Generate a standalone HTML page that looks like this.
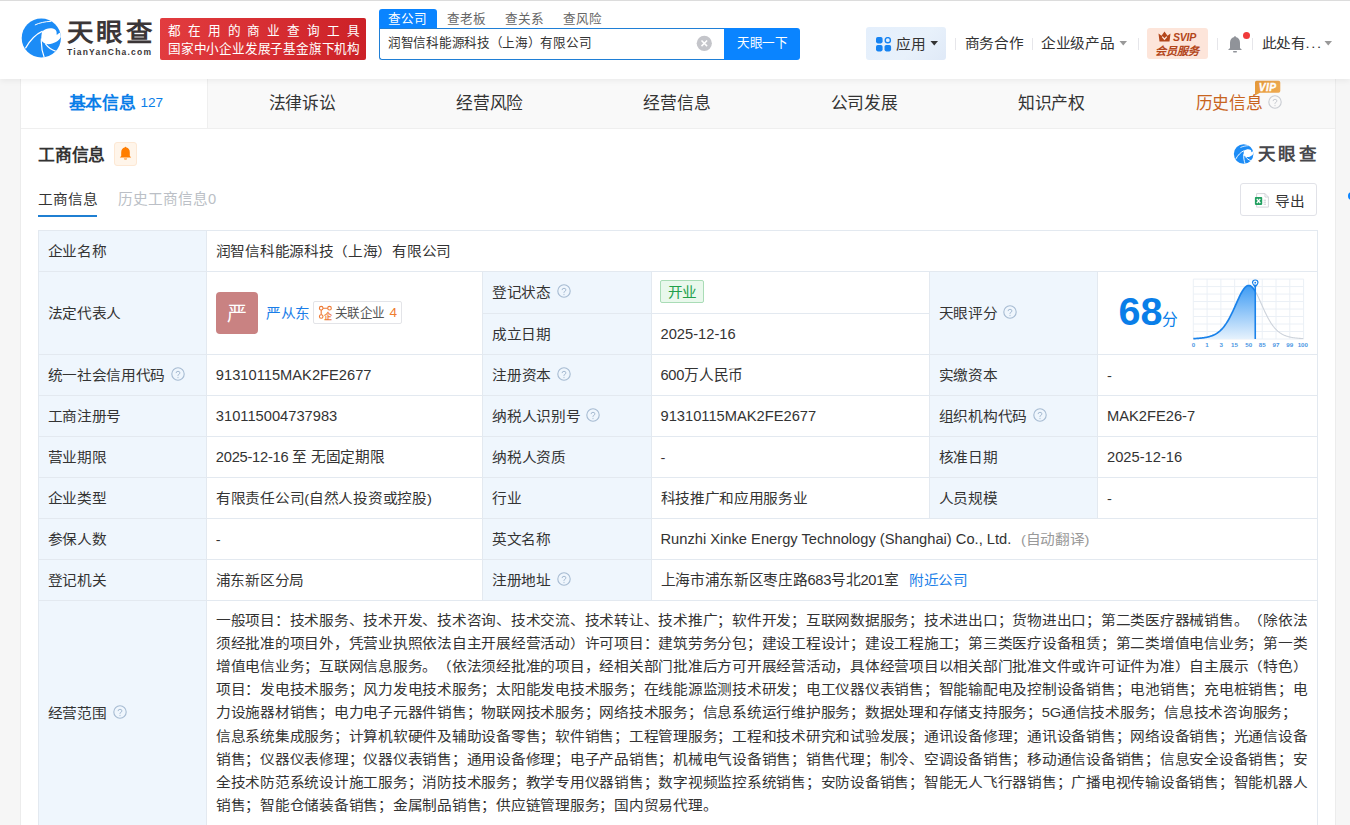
<!DOCTYPE html>
<html lang="zh-CN"><head><meta charset="utf-8">
<style>
*{margin:0;padding:0;box-sizing:border-box}
html,body{text-spacing-trim:space-all;width:1350px;height:825px;overflow:hidden;background:#f6f6f6;font-family:"Liberation Sans",sans-serif;color:#333}
.abs{position:absolute}
#hdr{position:absolute;left:0;top:0;width:1350px;height:79px;background:#fff;box-shadow:0 2px 6px rgba(0,0,0,.06);z-index:3}
.t{position:absolute;white-space:nowrap;line-height:1}
</style></head><body>
<div id="hdr">
 <svg class="abs" style="left:18px;top:14px" width="48" height="48" viewBox="0 0 48 48">
  <defs><clipPath id="lc"><circle cx="23.3" cy="24" r="19.6"/></clipPath></defs>
  <g clip-path="url(#lc)">
  <rect x="0" y="0" width="48" height="48" fill="#1c8cf6"/>
  <path d="M23.3 24.5 C23.3 21 23.8 18.8 24.4 17.2 C28 14.3 33.5 13.2 37.4 15.8 C38.8 17 38.9 19.5 38.4 20.6 C39.5 20.5 40.3 19.8 40.7 19.2 L46 17 L46 23.3 L42.8 23.3 C41 27.5 33 31.5 27.3 29.7 C25 28.8 23.3 27 23.3 24.5 Z" fill="#fff"/>
  <path d="M16.9 11 C21 9 27 7.5 33.4 7.3" stroke="#fff" stroke-width="1" fill="none"/>
  <path d="M7.4 34.4 C12 26 17 20.5 24.6 17.1" stroke="#fff" stroke-width="1.2" fill="none"/>
  <path d="M23.4 24.5 C23 31 24 38 26.4 44" stroke="#fff" stroke-width="1.2" fill="none"/>
  <path d="M27.3 29.7 C30 33.5 33.5 36 38 37.3" stroke="#fff" stroke-width="1.2" fill="none"/>
  </g>
 </svg>
 <div class="t" style="left:67px;top:20px;font-size:25px;font-weight:900;letter-spacing:2.7px;color:#3b3637;transform:scaleX(1.06);transform-origin:0 0">天眼查</div>
 <div class="t" style="left:67px;top:48px;font-size:8.5px;font-weight:bold;letter-spacing:1.2px;color:#3b3637">TianYanCha.com</div>
 <div class="abs" style="left:160px;top:18px;width:206px;height:42px;border-radius:2px;background:linear-gradient(90deg,#e23c3f,#cc2127)"></div>
 <div class="t" style="left:168px;top:25px;font-size:12.6px;letter-spacing:6.85px;color:#fff">都在用的商业查询工具</div>
 <div class="t" style="left:168px;top:42.5px;font-size:12.6px;letter-spacing:-0.2px;color:#fff">国家中小企业发展子基金旗下机构</div>
 <div class="abs" style="left:379px;top:9px;width:58px;height:20px;background:#0a84ff;border-radius:3px 3px 0 0"></div>
 <div class="t" style="left:388px;top:13px;font-size:12.6px;letter-spacing:0.15px;color:#fff">查公司</div>
 <div class="t" style="left:447px;top:13px;font-size:12.6px;letter-spacing:0.15px;color:#666">查老板</div>
 <div class="t" style="left:505px;top:13px;font-size:12.6px;letter-spacing:0.15px;color:#666">查关系</div>
 <div class="t" style="left:563px;top:13px;font-size:12.6px;letter-spacing:0.15px;color:#666">查风险</div>
 <div class="abs" style="left:379px;top:28px;width:346px;height:32px;border:1px solid #1f7fd6;border-right:0;border-radius:0 0 0 3px;background:#fff"></div>
 <div class="t" style="left:388px;top:37px;font-size:12.6px;letter-spacing:-0.3px;color:#333">润智信科能源科技（上海）有限公司</div>
 <svg class="abs" style="left:696px;top:35px" width="17" height="17" viewBox="0 0 17 17"><circle cx="8.3" cy="8.3" r="7.6" fill="#c4c5ca"/><path d="M5.5 5.5 L11.1 11.1 M11.1 5.5 L5.5 11.1" stroke="#fff" stroke-width="1.5"/></svg>
 <div class="abs" style="left:724px;top:28px;width:76px;height:32px;background:#0a84ff;border-radius:0 3px 3px 0"></div>
 <div class="t" style="left:737px;top:36.5px;font-size:12.6px;letter-spacing:-0.35px;color:#fff">天眼一下</div>

 <div class="abs" style="left:866px;top:27px;width:80px;height:33px;border-radius:3px;background:linear-gradient(135deg,#e4effc 0%,#e8f1fb 60%,#dfe9f7 100%)"></div>
 <svg class="abs" style="left:876px;top:37px" width="16" height="15" viewBox="0 0 16 15">
  <rect x="0" y="0" width="6.6" height="6.4" rx="1.8" fill="#1683f2"/>
  <circle cx="11.8" cy="3.2" r="2.6" fill="none" stroke="#1683f2" stroke-width="1.4"/>
  <rect x="0" y="8" width="6.6" height="6.4" rx="1.8" fill="#1683f2"/>
  <rect x="8.5" y="8" width="6.6" height="6.4" rx="1.8" fill="#1683f2"/>
 </svg>
 <div class="t" style="left:896px;top:36.5px;font-size:14.7px;letter-spacing:0.3px;color:#333;transform:scaleY(0.9);transform-origin:0 14.3px">应用</div>
 <svg class="abs" style="left:930px;top:41px" width="9" height="5" viewBox="0 0 9 5"><path d="M0.5 0 L8 0 L4.25 4.5 Z" fill="#333"/></svg>
 <div class="abs" style="left:955px;top:38px;width:1px;height:12px;background:#e6e6ea"></div>
 <div class="t" style="left:964.5px;top:36px;font-size:14.7px;letter-spacing:-0.3px;color:#333;transform:scaleY(0.9);transform-origin:0 14.3px">商务合作</div>
 <div class="abs" style="left:1032px;top:38px;width:1px;height:12px;background:#e6e6ea"></div>
 <div class="t" style="left:1041px;top:36px;font-size:14.7px;letter-spacing:-0.3px;color:#333;transform:scaleY(0.9);transform-origin:0 14.3px">企业级产品</div>
 <svg class="abs" style="left:1119px;top:41px" width="9" height="5" viewBox="0 0 9 5"><path d="M0.5 0 L8 0 L4.25 4.5 Z" fill="#999"/></svg>
 <div class="abs" style="left:1138px;top:38px;width:1px;height:12px;background:#e6e6ea"></div>
 <div class="abs" style="left:1147px;top:28px;width:61px;height:31px;border-radius:3px;background:#fde5da"></div>
 <svg class="abs" style="left:1158px;top:31px" width="13" height="11" viewBox="0 0 13 11"><path d="M0.5 2.5 L3.5 4.8 L6.5 0.6 L9.5 4.8 L12.5 2.5 L11.5 10.4 L1.5 10.4 Z" fill="#b3461a"/><path d="M4.2 5.6 L6.5 8.2 L8.8 5.6" stroke="#fde5da" stroke-width="1.3" fill="none"/></svg>
 <div class="t" style="left:1173px;top:31.5px;font-size:10.6px;font-weight:bold;font-style:italic;letter-spacing:-0.3px;color:#b3461a">SVIP</div>
 <div class="t" style="left:1154.5px;top:46px;font-size:11.2px;font-weight:bold;font-style:italic;color:#b3461a">会员服务</div>
 <div class="abs" style="left:1217px;top:38px;width:1px;height:12px;background:#e6e6ea"></div>
 <svg class="abs" style="left:1227px;top:35px" width="16" height="18" viewBox="0 0 16 18"><path d="M8 1 Q8.8 1 8.8 2 Q13 3 13 8 L13 13 L15 15 L1 15 L3 13 L3 8 Q3 3 7.2 2 Q7.2 1 8 1 Z" fill="#909399"/><rect x="6" y="16" width="4" height="1.4" rx="0.7" fill="#909399"/></svg>
 <div class="abs" style="left:1243px;top:31.5px;width:7px;height:7px;border-radius:50%;background:#f03a3a"></div>
 <div class="abs" style="left:1252px;top:38px;width:1px;height:12px;background:#e6e6ea"></div>
 <div class="t" style="left:1261.5px;top:36px;font-size:14.7px;letter-spacing:-0.3px;color:#333;transform:scaleY(0.9);transform-origin:0 14.3px">此处有<span style="letter-spacing:1.6px">...</span></div>
 <svg class="abs" style="left:1324px;top:41px" width="9" height="5" viewBox="0 0 9 5"><path d="M0.5 0 L8 0 L4.25 4.5 Z" fill="#999"/></svg>
</div>

<div class="abs" style="left:20px;top:79px;width:1316px;height:760px;background:#fff;border-left:1px solid #ececec;border-right:1px solid #ececec"></div>
<div class="abs" style="left:21px;top:79px;width:1314px;height:49px;background:#f9f9f9"></div>
<div class="abs" style="left:21px;top:128px;width:1314px;height:1px;background:#efefef"></div>
<div class="abs" style="left:21px;top:79px;width:186px;height:49px;background:#fff"></div>
<div class="abs" style="left:207px;top:79px;width:1px;height:49px;background:#efefef"></div>
<div class="t" style="left:68.5px;top:95.70px;font-size:16.8px;color:#0a7ee8;font-weight:bold;letter-spacing:-0.200px;">基本信息</div>
<div class="t" style="left:140.5px;top:95.90px;font-size:13.6px;color:#0a7ee8;">127</div>
<div class="t" style="left:268.7px;top:95.70px;font-size:16.8px;color:#333;letter-spacing:-0.200px;">法律诉讼</div>
<div class="t" style="left:456.0px;top:95.70px;font-size:16.8px;color:#333;letter-spacing:-0.200px;">经营风险</div>
<div class="t" style="left:643.3px;top:95.70px;font-size:16.8px;color:#333;letter-spacing:-0.200px;">经营信息</div>
<div class="t" style="left:830.6px;top:95.70px;font-size:16.8px;color:#333;letter-spacing:-0.200px;">公司发展</div>
<div class="t" style="left:1017.9px;top:95.70px;font-size:16.8px;color:#333;letter-spacing:-0.200px;">知识产权</div>
<div class="t" style="left:1195.5px;top:95.70px;font-size:16.8px;color:#c8641e;letter-spacing:-0.200px;">历史信息</div>
<svg class="abs" style="left:1268px;top:94.7px" width="14" height="14" viewBox="0 0 14 14"><circle cx="7" cy="7" r="6.2" fill="none" stroke="#c9ccd2" stroke-width="1.1"/><path d="M5.1 6.1 Q5.1 4.3 7 4.3 Q8.9 4.3 8.9 5.9 Q8.9 7 7.4 7.6 Q7 7.8 7 8.6 L7 9.1" fill="none" stroke="#c9ccd2" stroke-width="1"/><circle cx="7" cy="10.6" r="0.6" fill="#c9ccd2"/></svg>
<svg class="abs" style="left:1254px;top:80px" width="27" height="16" viewBox="0 0 27 16"><defs><linearGradient id="vg" x1="0" y1="0" x2="1" y2="0"><stop offset="0" stop-color="#e79a3a"/><stop offset="1" stop-color="#eeaa52"/></linearGradient></defs><path d="M2.5 0.8 L24.5 0.8 Q26.3 0.8 26.3 2.6 L26.3 11 Q26.3 12.8 24.5 12.8 L6 12.8 L1 15.5 L1 2.6 Q1 0.8 2.5 0.8 Z" fill="url(#vg)"/><text x="13.6" y="10.6" text-anchor="middle" font-family="Liberation Sans" font-weight="bold" font-style="italic" font-size="10.2" letter-spacing="0.5" fill="#fff" stroke="#fff" stroke-width="0.35">VIP</text></svg>
<div class="t" style="left:38px;top:147.70px;font-size:16.8px;color:#333;font-weight:bold;letter-spacing:-0.200px;">工商信息</div>
<div class="abs" style="left:114px;top:142px;width:23px;height:24px;background:#fff5ea;border:1px solid #fde8d4;border-radius:3px"></div>
<svg class="abs" style="left:119px;top:146px" width="13" height="14" viewBox="0 0 13 14"><path d="M6.5 0.8 Q7.3 0.8 7.3 1.6 Q10.8 2.4 10.8 6.6 L10.8 10 L12.2 11.6 L0.8 11.6 L2.2 10 L2.2 6.6 Q2.2 2.4 5.7 1.6 Q5.7 0.8 6.5 0.8 Z" fill="#ff7d00"/><path d="M4.8 12.4 L8.2 12.4 Q7.8 13.6 6.5 13.6 Q5.2 13.6 4.8 12.4 Z" fill="#ff7d00"/></svg>
<svg class="abs" style="left:1232px;top:142px" width="24" height="24" viewBox="0 0 48 48"><defs><clipPath id="lc2"><circle cx="23.3" cy="24" r="19.6"/></clipPath></defs><g clip-path="url(#lc2)"><rect x="0" y="0" width="48" height="48" fill="#1c8cf6"/><path d="M23.3 24.5 C23.3 21 23.8 18.8 24.4 17.2 C28 14.3 33.5 13.2 37.4 15.8 C38.8 17 38.9 19.5 38.4 20.6 C39.5 20.5 40.3 19.8 40.7 19.2 L46 17 L46 23.3 L42.8 23.3 C41 27.5 33 31.5 27.3 29.7 C25 28.8 23.3 27 23.3 24.5 Z" fill="#fff"/><path d="M16.9 11 C21 9 27 7.5 33.4 7.3" stroke="#fff" stroke-width="1.6" fill="none"/><path d="M7.4 34.4 C12 26 17 20.5 24.6 17.1" stroke="#fff" stroke-width="1.9" fill="none"/><path d="M23.4 24.5 C23 31 24 38 26.4 44" stroke="#fff" stroke-width="1.9" fill="none"/><path d="M27.3 29.7 C30 33.5 33.5 36 38 37.3" stroke="#fff" stroke-width="1.9" fill="none"/></g></svg>
<div class="t" style="left:1257.5px;top:146.05px;font-size:17.5px;color:#47474b;font-weight:bold;letter-spacing:3.6px">天眼查</div>
<div class="t" style="left:38px;top:191.55px;font-size:14.7px;color:#333;transform:scaleY(0.9);transform-origin:0 14.3px;">工商信息</div>
<div class="t" style="left:118px;top:191.55px;font-size:14.7px;color:#bbbfc6;">历史工商信息0</div>
<div class="abs" style="left:38px;top:215px;width:59px;height:2px;background:#1f7fd2"></div>
<div class="abs" style="left:1240px;top:183px;width:77px;height:33px;border:1px solid #e1e2e8;border-radius:3px;background:#fff"></div>
<svg class="abs" style="left:1254px;top:192px" width="16" height="17" viewBox="0 0 16 17"><path d="M2.6 1.6 L11 1.6 L14.4 5 L14.4 15.1 L2.6 15.1 Z" fill="#fff" stroke="#d3d5da" stroke-width="1"/><path d="M11 1.6 L11 5 L14.4 5" fill="none" stroke="#d3d5da" stroke-width="1"/><path d="M9.6 8.2 L12 8.2 M9.6 10.2 L12 10.2 M9.6 12.2 L12 12.2" stroke="#c5c8ce" stroke-width="0.9"/><rect x="0.9" y="5" width="7.3" height="7.9" rx="0.8" fill="#22a060"/><path d="M2.8 6.9 L6.3 11 M6.3 6.9 L2.8 11" stroke="#fff" stroke-width="1.3"/></svg>
<div class="t" style="left:1275px;top:194.25px;font-size:14.7px;color:#333;letter-spacing:-0.300px;transform:scaleY(0.9);transform-origin:0 14.3px;">导出</div>
<div class="abs" style="left:38px;top:230px;width:168px;height:596px;background:#eff6fd"></div>
<div class="abs" style="left:482px;top:271px;width:169px;height:329px;background:#eff6fd"></div>
<div class="abs" style="left:929px;top:271px;width:168px;height:247px;background:#eff6fd"></div>
<div class="abs" style="left:38px;top:230px;width:1280px;height:1px;background:#e3e9f0"></div>
<div class="abs" style="left:38px;top:271px;width:1280px;height:1px;background:#e3e9f0"></div>
<div class="abs" style="left:38px;top:354px;width:1280px;height:1px;background:#e3e9f0"></div>
<div class="abs" style="left:38px;top:395px;width:1280px;height:1px;background:#e3e9f0"></div>
<div class="abs" style="left:38px;top:436px;width:1280px;height:1px;background:#e3e9f0"></div>
<div class="abs" style="left:38px;top:477px;width:1280px;height:1px;background:#e3e9f0"></div>
<div class="abs" style="left:38px;top:518px;width:1280px;height:1px;background:#e3e9f0"></div>
<div class="abs" style="left:38px;top:559px;width:1280px;height:1px;background:#e3e9f0"></div>
<div class="abs" style="left:38px;top:600px;width:1280px;height:1px;background:#e3e9f0"></div>
<div class="abs" style="left:482px;top:313px;width:447px;height:1px;background:#e3e9f0"></div>
<div class="abs" style="left:38px;top:230px;width:1px;height:596px;background:#e3e9f0"></div>
<div class="abs" style="left:206px;top:230px;width:1px;height:596px;background:#e3e9f0"></div>
<div class="abs" style="left:1317px;top:230px;width:1px;height:596px;background:#e3e9f0"></div>
<div class="abs" style="left:482px;top:271px;width:1px;height:329px;background:#e3e9f0"></div>
<div class="abs" style="left:651px;top:271px;width:1px;height:329px;background:#e3e9f0"></div>
<div class="abs" style="left:929px;top:271px;width:1px;height:247px;background:#e3e9f0"></div>
<div class="abs" style="left:1097px;top:271px;width:1px;height:247px;background:#e3e9f0"></div>
<div class="t" style="left:47.6px;top:244.25px;font-size:14.7px;color:#333;letter-spacing:-0.300px;transform:scaleY(0.9);transform-origin:0 14.3px;">企业名称</div>
<div class="t" style="left:215.8px;top:244.25px;font-size:14.7px;color:#333;letter-spacing:-0.300px;transform:scaleY(0.9);transform-origin:0 14.3px;">润智信科能源科技（上海）有限公司</div>
<div class="t" style="left:47.6px;top:306.25px;font-size:14.7px;color:#333;letter-spacing:-0.300px;transform:scaleY(0.9);transform-origin:0 14.3px;">法定代表人</div>
<div class="abs" style="left:216px;top:292px;width:42px;height:42px;background:#c98282;border-radius:4px"></div>
<div class="t" style="left:226.5px;top:303.60px;font-size:20px;color:#fff;">严</div>
<div class="t" style="left:266px;top:305.65px;font-size:14.7px;color:#1a7ee8;letter-spacing:-0.300px;transform:scaleY(0.9);transform-origin:0 14.3px;">严从东</div>
<div class="abs" style="left:313px;top:301px;width:89px;height:23px;border:1px solid #e3e4e8;border-radius:2px;background:#fff"></div>
<svg class="abs" style="left:318px;top:305px" width="16" height="16" viewBox="0 0 16 16"><g fill="none" stroke="#ee7a35" stroke-width="1.1"><circle cx="3.2" cy="3.2" r="1.8"/><circle cx="11.5" cy="3.2" r="1.8"/><circle cx="3.2" cy="11.5" r="1.8"/><path d="M5 3.2 L9.7 3.2 M3.2 5 L3.2 9.7"/></g><text x="10" y="14" text-anchor="middle" font-size="8" font-weight="bold" fill="#ee7a35">企</text></svg>
<div class="t" style="left:334.5px;top:306.70px;font-size:12.6px;color:#555;letter-spacing:-0.400px;">关联企业</div>
<div class="t" style="left:389.5px;top:306.10px;font-size:13.6px;color:#f07c2e;">4</div>
<div class="t" style="left:492px;top:285.45px;font-size:14.7px;color:#333;letter-spacing:-0.300px;transform:scaleY(0.9);transform-origin:0 14.3px;">登记状态</div>
<svg class="abs" style="left:556.5px;top:283.9px" width="14" height="14" viewBox="0 0 14 14"><circle cx="7" cy="7" r="6.2" fill="none" stroke="#a6bbd2" stroke-width="1.1"/><path d="M5.1 6.1 Q5.1 4.3 7 4.3 Q8.9 4.3 8.9 5.9 Q8.9 7 7.4 7.6 Q7 7.8 7 8.6 L7 9.1" fill="none" stroke="#a6bbd2" stroke-width="1"/><circle cx="7" cy="10.6" r="0.6" fill="#a6bbd2"/></svg>
<div class="t" style="left:492px;top:326.75px;font-size:14.7px;color:#333;letter-spacing:-0.300px;transform:scaleY(0.9);transform-origin:0 14.3px;">成立日期</div>
<div class="abs" style="left:660px;top:280px;width:44px;height:23px;background:#e9f8ec;border:1px solid #a9dcb6;border-radius:2px"></div>
<div class="t" style="left:667.5px;top:285.05px;font-size:14.7px;color:#22a04b;letter-spacing:-0.300px;transform:scaleY(0.9);transform-origin:0 14.3px;">开业</div>
<div class="t" style="left:660.5px;top:326.65px;font-size:14.7px;color:#333;">2025-12-16</div>
<div class="t" style="left:938.8px;top:305.75px;font-size:14.7px;color:#333;letter-spacing:-0.300px;transform:scaleY(0.9);transform-origin:0 14.3px;">天眼评分</div>
<svg class="abs" style="left:1003px;top:304.7px" width="14" height="14" viewBox="0 0 14 14"><circle cx="7" cy="7" r="6.2" fill="none" stroke="#a6bbd2" stroke-width="1.1"/><path d="M5.1 6.1 Q5.1 4.3 7 4.3 Q8.9 4.3 8.9 5.9 Q8.9 7 7.4 7.6 Q7 7.8 7 8.6 L7 9.1" fill="none" stroke="#a6bbd2" stroke-width="1"/><circle cx="7" cy="10.6" r="0.6" fill="#a6bbd2"/></svg>
<div class="t" style="left:1118.5px;top:292.2px;font-size:39.5px;font-weight:bold;color:#0a7ee8">68</div>
<div class="t" style="left:1162px;top:311.75px;font-size:15.7px;color:#0a7ee8;letter-spacing:-0.300px;">分</div>
<svg class="abs" style="left:1188px;top:274px" width="124" height="76" viewBox="0 0 124 76">
<defs><linearGradient id="cg" x1="0" y1="0" x2="0" y2="1"><stop offset="0" stop-color="#3d9bf4"/><stop offset="1" stop-color="#e6f2fd"/></linearGradient></defs>
<g stroke="#ebf0f6" stroke-width="1"><line x1="5.30" y1="5.10" x2="5.30" y2="65.00"/><line x1="19.09" y1="5.10" x2="19.09" y2="65.00"/><line x1="32.88" y1="5.10" x2="32.88" y2="65.00"/><line x1="46.66" y1="5.10" x2="46.66" y2="65.00"/><line x1="60.45" y1="5.10" x2="60.45" y2="65.00"/><line x1="74.24" y1="5.10" x2="74.24" y2="65.00"/><line x1="88.02" y1="5.10" x2="88.02" y2="65.00"/><line x1="101.81" y1="5.10" x2="101.81" y2="65.00"/><line x1="115.60" y1="5.10" x2="115.60" y2="65.00"/><line x1="5.30" y1="5.10" x2="115.60" y2="5.10"/><line x1="5.30" y1="12.59" x2="115.60" y2="12.59"/><line x1="5.30" y1="20.07" x2="115.60" y2="20.07"/><line x1="5.30" y1="27.56" x2="115.60" y2="27.56"/><line x1="5.30" y1="35.05" x2="115.60" y2="35.05"/><line x1="5.30" y1="42.54" x2="115.60" y2="42.54"/><line x1="5.30" y1="50.02" x2="115.60" y2="50.02"/><line x1="5.30" y1="57.51" x2="115.60" y2="57.51"/><line x1="5.30" y1="65.00" x2="115.60" y2="65.00"/></g>
<path d="M5.30 64.63 L5.80 64.61 L6.30 64.58 L6.80 64.56 L7.30 64.53 L7.80 64.51 L8.30 64.48 L8.80 64.45 L9.30 64.41 L9.80 64.38 L10.30 64.34 L10.80 64.30 L11.30 64.26 L11.80 64.22 L12.30 64.17 L12.80 64.12 L13.30 64.07 L13.80 64.01 L14.30 63.95 L14.80 63.89 L15.30 63.82 L15.80 63.75 L16.30 63.67 L16.80 63.59 L17.30 63.51 L17.80 63.42 L18.30 63.32 L18.80 63.22 L19.30 63.11 L19.80 63.00 L20.30 62.88 L20.80 62.75 L21.30 62.61 L21.80 62.47 L22.30 62.31 L22.80 62.15 L23.30 61.98 L23.80 61.80 L24.30 61.61 L24.80 61.40 L25.30 61.19 L25.80 60.96 L26.30 60.72 L26.80 60.47 L27.30 60.20 L27.80 59.92 L28.30 59.62 L28.80 59.31 L29.30 58.98 L29.80 58.63 L30.30 58.27 L30.80 57.88 L31.30 57.48 L31.80 57.05 L32.30 56.61 L32.80 56.14 L33.30 55.65 L33.80 55.14 L34.30 54.60 L34.80 54.04 L35.30 53.45 L35.80 52.84 L36.30 52.20 L36.80 51.54 L37.30 50.85 L37.80 50.13 L38.30 49.38 L38.80 48.61 L39.30 47.81 L39.80 46.98 L40.30 46.13 L40.80 45.25 L41.30 44.34 L41.80 43.41 L42.30 42.45 L42.80 41.47 L43.30 40.46 L43.80 39.44 L44.30 38.39 L44.80 37.33 L45.30 36.25 L45.80 35.16 L46.30 34.05 L46.80 32.94 L47.30 31.81 L47.80 30.69 L48.30 29.56 L48.80 28.44 L49.30 27.32 L49.80 26.21 L50.30 25.12 L50.80 24.04 L51.30 22.98 L51.80 21.94 L52.30 20.93 L52.80 19.96 L53.30 19.02 L53.80 18.12 L54.30 17.26 L54.80 16.45 L55.30 15.69 L55.80 14.99 L56.30 14.34 L56.80 13.75 L57.30 13.23 L57.80 12.77 L58.30 12.38 L58.80 12.06 L59.30 11.81 L59.80 11.63 L60.30 11.53 L60.80 11.50 L61.30 11.54 L61.80 11.66 L62.30 11.85 L62.80 12.12 L63.30 12.45 L63.80 12.86 L64.30 13.33 L64.80 13.87 L65.30 14.47 L65.80 15.12 L66.30 15.84 L66.80 16.61 L67.25 17.34 L67.25 65.00 L5.30 65.00 Z" fill="url(#cg)"/>
<path d="M67.25 17.34 L67.75 18.21 L68.25 19.11 L68.75 20.05 L69.25 21.03 L69.75 22.04 L70.25 23.08 L70.75 24.14 L71.25 25.22 L71.75 26.32 L72.25 27.43 L72.75 28.55 L73.25 29.68 L73.75 30.80 L74.25 31.93 L74.75 33.05 L75.25 34.16 L75.75 35.27 L76.25 36.36 L76.75 37.44 L77.25 38.50 L77.75 39.54 L78.25 40.56 L78.75 41.57 L79.25 42.54 L79.75 43.50 L80.25 44.43 L80.75 45.33 L81.25 46.21 L81.75 47.07 L82.25 47.89 L82.75 48.69 L83.25 49.46 L83.75 50.20 L84.25 50.92 L84.75 51.60 L85.25 52.27 L85.75 52.90 L86.25 53.51 L86.75 54.10 L87.25 54.65 L87.75 55.19 L88.25 55.70 L88.75 56.19 L89.25 56.65 L89.75 57.10 L90.25 57.52 L90.75 57.92 L91.25 58.30 L91.75 58.67 L92.25 59.01 L92.75 59.34 L93.25 59.65 L93.75 59.95 L94.25 60.23 L94.75 60.50 L95.25 60.75 L95.75 60.99 L96.25 61.21 L96.75 61.43 L97.25 61.63 L97.75 61.82 L98.25 62.00 L98.75 62.17 L99.25 62.33 L99.75 62.48 L100.25 62.63 L100.75 62.76 L101.25 62.89 L101.75 63.01 L102.25 63.12 L102.75 63.23 L103.25 63.33 L103.75 63.43 L104.25 63.52 L104.75 63.60 L105.25 63.68 L105.75 63.76 L106.25 63.83 L106.75 63.89 L107.25 63.96 L107.75 64.02 L108.25 64.07 L108.75 64.12 L109.25 64.17 L109.75 64.22 L110.25 64.27 L110.75 64.31 L111.25 64.35 L111.75 64.38 L112.25 64.42 L112.75 64.45 L113.25 64.48 L113.75 64.51 L114.25 64.54 L114.75 64.56 L115.25 64.59" fill="none" stroke="#cdd3db" stroke-width="1.1"/>
<path d="M5.30 64.63 L5.80 64.61 L6.30 64.58 L6.80 64.56 L7.30 64.53 L7.80 64.51 L8.30 64.48 L8.80 64.45 L9.30 64.41 L9.80 64.38 L10.30 64.34 L10.80 64.30 L11.30 64.26 L11.80 64.22 L12.30 64.17 L12.80 64.12 L13.30 64.07 L13.80 64.01 L14.30 63.95 L14.80 63.89 L15.30 63.82 L15.80 63.75 L16.30 63.67 L16.80 63.59 L17.30 63.51 L17.80 63.42 L18.30 63.32 L18.80 63.22 L19.30 63.11 L19.80 63.00 L20.30 62.88 L20.80 62.75 L21.30 62.61 L21.80 62.47 L22.30 62.31 L22.80 62.15 L23.30 61.98 L23.80 61.80 L24.30 61.61 L24.80 61.40 L25.30 61.19 L25.80 60.96 L26.30 60.72 L26.80 60.47 L27.30 60.20 L27.80 59.92 L28.30 59.62 L28.80 59.31 L29.30 58.98 L29.80 58.63 L30.30 58.27 L30.80 57.88 L31.30 57.48 L31.80 57.05 L32.30 56.61 L32.80 56.14 L33.30 55.65 L33.80 55.14 L34.30 54.60 L34.80 54.04 L35.30 53.45 L35.80 52.84 L36.30 52.20 L36.80 51.54 L37.30 50.85 L37.80 50.13 L38.30 49.38 L38.80 48.61 L39.30 47.81 L39.80 46.98 L40.30 46.13 L40.80 45.25 L41.30 44.34 L41.80 43.41 L42.30 42.45 L42.80 41.47 L43.30 40.46 L43.80 39.44 L44.30 38.39 L44.80 37.33 L45.30 36.25 L45.80 35.16 L46.30 34.05 L46.80 32.94 L47.30 31.81 L47.80 30.69 L48.30 29.56 L48.80 28.44 L49.30 27.32 L49.80 26.21 L50.30 25.12 L50.80 24.04 L51.30 22.98 L51.80 21.94 L52.30 20.93 L52.80 19.96 L53.30 19.02 L53.80 18.12 L54.30 17.26 L54.80 16.45 L55.30 15.69 L55.80 14.99 L56.30 14.34 L56.80 13.75 L57.30 13.23 L57.80 12.77 L58.30 12.38 L58.80 12.06 L59.30 11.81 L59.80 11.63 L60.30 11.53 L60.80 11.50 L61.30 11.54 L61.80 11.66 L62.30 11.85 L62.80 12.12 L63.30 12.45 L63.80 12.86 L64.30 13.33 L64.80 13.87 L65.30 14.47 L65.80 15.12 L66.30 15.84 L66.80 16.61 L67.25 17.34" fill="none" stroke="#1a82ea" stroke-width="1.7" stroke-linejoin="round"/>
<line x1="67.25" y1="11" x2="67.25" y2="65.00" stroke="#1a82ea" stroke-width="1.6"/>
<path d="M63.95 8.8 A3.3 3.3 0 1 1 70.55 8.8 Q70.25 10.8 67.25 13.8 Q64.25 10.8 63.95 8.8 Z" fill="#1a82ea"/>
<circle cx="67.25" cy="8.7" r="2.1" fill="#fff"/><circle cx="67.25" cy="8.7" r="0.9" fill="#1a82ea"/>
<g font-family="Liberation Sans" font-size="6.2" font-weight="bold" fill="#4d97e3"><text x="5.4" y="73.2" text-anchor="middle">0</text><text x="19.0" y="73.2" text-anchor="middle">1</text><text x="33.2" y="73.2" text-anchor="middle">3</text><text x="46.4" y="73.2" text-anchor="middle">15</text><text x="60.8" y="73.2" text-anchor="middle">50</text><text x="74.2" y="73.2" text-anchor="middle">85</text><text x="88.0" y="73.2" text-anchor="middle">97</text><text x="101.8" y="73.2" text-anchor="middle">99</text><text x="114.8" y="73.2" text-anchor="middle">100</text></g>
</svg>
<div class="t" style="left:47.6px;top:368.25px;font-size:14.7px;color:#333;letter-spacing:-0.300px;transform:scaleY(0.9);transform-origin:0 14.3px;">统一社会信用代码</div>
<svg class="abs" style="left:170.5px;top:367.4px" width="14" height="14" viewBox="0 0 14 14"><circle cx="7" cy="7" r="6.2" fill="none" stroke="#a6bbd2" stroke-width="1.1"/><path d="M5.1 6.1 Q5.1 4.3 7 4.3 Q8.9 4.3 8.9 5.9 Q8.9 7 7.4 7.6 Q7 7.8 7 8.6 L7 9.1" fill="none" stroke="#a6bbd2" stroke-width="1"/><circle cx="7" cy="10.6" r="0.6" fill="#a6bbd2"/></svg>
<div class="t" style="left:215.8px;top:368.15px;font-size:14.7px;color:#333;">91310115MAK2FE2677</div>
<div class="t" style="left:492px;top:368.25px;font-size:14.7px;color:#333;letter-spacing:-0.250px;transform:scaleY(0.9);transform-origin:0 14.3px;">注册资本</div>
<svg class="abs" style="left:556.5px;top:367.4px" width="14" height="14" viewBox="0 0 14 14"><circle cx="7" cy="7" r="6.2" fill="none" stroke="#a6bbd2" stroke-width="1.1"/><path d="M5.1 6.1 Q5.1 4.3 7 4.3 Q8.9 4.3 8.9 5.9 Q8.9 7 7.4 7.6 Q7 7.8 7 8.6 L7 9.1" fill="none" stroke="#a6bbd2" stroke-width="1"/><circle cx="7" cy="10.6" r="0.6" fill="#a6bbd2"/></svg>
<div class="t" style="left:660.5px;top:368.25px;font-size:14.7px;color:#333;letter-spacing:-0.300px;">600万人民币</div>
<div class="t" style="left:938.8px;top:368.25px;font-size:14.7px;color:#333;letter-spacing:-0.300px;transform:scaleY(0.9);transform-origin:0 14.3px;">实缴资本</div>
<div class="t" style="left:1107px;top:368.15px;font-size:14.7px;color:#333;transform:scaleY(0.9);transform-origin:0 14.3px;">-</div>
<div class="t" style="left:47.6px;top:409.25px;font-size:14.7px;color:#333;letter-spacing:-0.300px;transform:scaleY(0.9);transform-origin:0 14.3px;">工商注册号</div>
<div class="t" style="left:215.8px;top:409.15px;font-size:14.7px;color:#333;">310115004737983</div>
<div class="t" style="left:492px;top:409.25px;font-size:14.7px;color:#333;letter-spacing:-0.250px;transform:scaleY(0.9);transform-origin:0 14.3px;">纳税人识别号</div>
<svg class="abs" style="left:585.8px;top:408.4px" width="14" height="14" viewBox="0 0 14 14"><circle cx="7" cy="7" r="6.2" fill="none" stroke="#a6bbd2" stroke-width="1.1"/><path d="M5.1 6.1 Q5.1 4.3 7 4.3 Q8.9 4.3 8.9 5.9 Q8.9 7 7.4 7.6 Q7 7.8 7 8.6 L7 9.1" fill="none" stroke="#a6bbd2" stroke-width="1"/><circle cx="7" cy="10.6" r="0.6" fill="#a6bbd2"/></svg>
<div class="t" style="left:660.5px;top:409.15px;font-size:14.7px;color:#333;">91310115MAK2FE2677</div>
<div class="t" style="left:938.8px;top:409.25px;font-size:14.7px;color:#333;letter-spacing:-0.300px;transform:scaleY(0.9);transform-origin:0 14.3px;">组织机构代码</div>
<svg class="abs" style="left:1033px;top:408.4px" width="14" height="14" viewBox="0 0 14 14"><circle cx="7" cy="7" r="6.2" fill="none" stroke="#a6bbd2" stroke-width="1.1"/><path d="M5.1 6.1 Q5.1 4.3 7 4.3 Q8.9 4.3 8.9 5.9 Q8.9 7 7.4 7.6 Q7 7.8 7 8.6 L7 9.1" fill="none" stroke="#a6bbd2" stroke-width="1"/><circle cx="7" cy="10.6" r="0.6" fill="#a6bbd2"/></svg>
<div class="t" style="left:1107px;top:409.15px;font-size:14.7px;color:#333;">MAK2FE26-7</div>
<div class="t" style="left:47.6px;top:450.25px;font-size:14.7px;color:#333;letter-spacing:-0.300px;transform:scaleY(0.9);transform-origin:0 14.3px;">营业期限</div>
<div class="t" style="left:215.8px;top:450.25px;font-size:14.7px;color:#333;letter-spacing:-0.250px;">2025-12-16 至 无固定期限</div>
<div class="t" style="left:492px;top:450.25px;font-size:14.7px;color:#333;letter-spacing:-0.250px;transform:scaleY(0.9);transform-origin:0 14.3px;">纳税人资质</div>
<div class="t" style="left:660.5px;top:450.15px;font-size:14.7px;color:#333;transform:scaleY(0.9);transform-origin:0 14.3px;">-</div>
<div class="t" style="left:938.8px;top:450.25px;font-size:14.7px;color:#333;letter-spacing:-0.300px;transform:scaleY(0.9);transform-origin:0 14.3px;">核准日期</div>
<div class="t" style="left:1107px;top:450.15px;font-size:14.7px;color:#333;">2025-12-16</div>
<div class="t" style="left:47.6px;top:491.25px;font-size:14.7px;color:#333;letter-spacing:-0.300px;transform:scaleY(0.9);transform-origin:0 14.3px;">企业类型</div>
<div class="t" style="left:215.8px;top:491.25px;font-size:14.7px;color:#333;letter-spacing:-0.250px;transform:scaleY(0.9);transform-origin:0 14.3px;">有限责任公司(自然人投资或控股)</div>
<div class="t" style="left:492px;top:491.25px;font-size:14.7px;color:#333;letter-spacing:-0.250px;transform:scaleY(0.9);transform-origin:0 14.3px;">行业</div>
<div class="t" style="left:660.5px;top:491.25px;font-size:14.7px;color:#333;letter-spacing:-0.300px;transform:scaleY(0.9);transform-origin:0 14.3px;">科技推广和应用服务业</div>
<div class="t" style="left:938.8px;top:491.25px;font-size:14.7px;color:#333;letter-spacing:-0.300px;transform:scaleY(0.9);transform-origin:0 14.3px;">人员规模</div>
<div class="t" style="left:1107px;top:491.15px;font-size:14.7px;color:#333;transform:scaleY(0.9);transform-origin:0 14.3px;">-</div>
<div class="t" style="left:47.6px;top:532.25px;font-size:14.7px;color:#333;letter-spacing:-0.300px;transform:scaleY(0.9);transform-origin:0 14.3px;">参保人数</div>
<div class="t" style="left:215.8px;top:532.15px;font-size:14.7px;color:#333;transform:scaleY(0.9);transform-origin:0 14.3px;">-</div>
<div class="t" style="left:492px;top:532.25px;font-size:14.7px;color:#333;letter-spacing:-0.300px;transform:scaleY(0.9);transform-origin:0 14.3px;">英文名称</div>
<div class="t" style="left:660.5px;top:532.15px;font-size:14.7px;color:#333;">Runzhi Xinke Energy Technology (Shanghai) Co., Ltd.</div>
<div class="t" style="left:1021px;top:532.25px;font-size:14.7px;color:#999;letter-spacing:-0.300px;transform:scaleY(0.9);transform-origin:0 14.3px;">(自动翻译)</div>
<div class="t" style="left:47.6px;top:573.25px;font-size:14.7px;color:#333;letter-spacing:-0.300px;transform:scaleY(0.9);transform-origin:0 14.3px;">登记机关</div>
<div class="t" style="left:215.8px;top:573.25px;font-size:14.7px;color:#333;letter-spacing:-0.300px;transform:scaleY(0.9);transform-origin:0 14.3px;">浦东新区分局</div>
<div class="t" style="left:492px;top:573.25px;font-size:14.7px;color:#333;letter-spacing:-0.300px;transform:scaleY(0.9);transform-origin:0 14.3px;">注册地址</div>
<svg class="abs" style="left:556.5px;top:572.4px" width="14" height="14" viewBox="0 0 14 14"><circle cx="7" cy="7" r="6.2" fill="none" stroke="#a6bbd2" stroke-width="1.1"/><path d="M5.1 6.1 Q5.1 4.3 7 4.3 Q8.9 4.3 8.9 5.9 Q8.9 7 7.4 7.6 Q7 7.8 7 8.6 L7 9.1" fill="none" stroke="#a6bbd2" stroke-width="1"/><circle cx="7" cy="10.6" r="0.6" fill="#a6bbd2"/></svg>
<div class="t" style="left:660.5px;top:573.25px;font-size:14.7px;color:#333;letter-spacing:-0.300px;">上海市浦东新区枣庄路683号北201室</div>
<div class="t" style="left:909px;top:573.25px;font-size:14.7px;color:#1a7ee8;letter-spacing:-0.300px;transform:scaleY(0.9);transform-origin:0 14.3px;">附近公司</div>
<div class="t" style="left:47.6px;top:705.75px;font-size:14.7px;color:#333;letter-spacing:-0.300px;transform:scaleY(0.9);transform-origin:0 14.3px;">经营范围</div>
<svg class="abs" style="left:112.5px;top:704.9px" width="14" height="14" viewBox="0 0 14 14"><circle cx="7" cy="7" r="6.2" fill="none" stroke="#a6bbd2" stroke-width="1.1"/><path d="M5.1 6.1 Q5.1 4.3 7 4.3 Q8.9 4.3 8.9 5.9 Q8.9 7 7.4 7.6 Q7 7.8 7 8.6 L7 9.1" fill="none" stroke="#a6bbd2" stroke-width="1"/><circle cx="7" cy="10.6" r="0.6" fill="#a6bbd2"/></svg>
<div class="t" style="left:215.8px;top:613.05px;font-size:14.7px;color:#333;letter-spacing:-0.250px;transform:scaleY(0.9);transform-origin:0 14.3px;">一般项目：技术服务、技术开发、技术咨询、技术交流、技术转让、技术推广；软件开发；互联网数据服务；技术进出口；货物进出口；第二类医疗器械销售。（除依法</div>
<div class="t" style="left:215.8px;top:636.15px;font-size:14.7px;color:#333;letter-spacing:-0.250px;transform:scaleY(0.9);transform-origin:0 14.3px;">须经批准的项目外，凭营业执照依法自主开展经营活动）许可项目：建筑劳务分包；建设工程设计；建设工程施工；第三类医疗设备租赁；第二类增值电信业务；第一类</div>
<div class="t" style="left:215.8px;top:659.25px;font-size:14.7px;color:#333;letter-spacing:-0.250px;transform:scaleY(0.9);transform-origin:0 14.3px;">增值电信业务；互联网信息服务。（依法须经批准的项目，经相关部门批准后方可开展经营活动，具体经营项目以相关部门批准文件或许可证件为准）自主展示（特色）</div>
<div class="t" style="left:215.8px;top:682.35px;font-size:14.7px;color:#333;letter-spacing:-0.250px;transform:scaleY(0.9);transform-origin:0 14.3px;">项目：发电技术服务；风力发电技术服务；太阳能发电技术服务；在线能源监测技术研发；电工仪器仪表销售；智能输配电及控制设备销售；电池销售；充电桩销售；电</div>
<div class="t" style="left:215.8px;top:705.45px;font-size:14.7px;color:#333;letter-spacing:-0.250px;transform:scaleY(0.9);transform-origin:0 14.3px;">力设施器材销售；电力电子元器件销售；物联网技术服务；网络技术服务；信息系统运行维护服务；数据处理和存储支持服务；5G通信技术服务；信息技术咨询服务；</div>
<div class="t" style="left:215.8px;top:728.55px;font-size:14.7px;color:#333;letter-spacing:-0.250px;transform:scaleY(0.9);transform-origin:0 14.3px;">信息系统集成服务；计算机软硬件及辅助设备零售；软件销售；工程管理服务；工程和技术研究和试验发展；通讯设备修理；通讯设备销售；网络设备销售；光通信设备</div>
<div class="t" style="left:215.8px;top:751.65px;font-size:14.7px;color:#333;letter-spacing:-0.250px;transform:scaleY(0.9);transform-origin:0 14.3px;">销售；仪器仪表修理；仪器仪表销售；通用设备修理；电子产品销售；机械电气设备销售；销售代理；制冷、空调设备销售；移动通信设备销售；信息安全设备销售；安</div>
<div class="t" style="left:215.8px;top:774.75px;font-size:14.7px;color:#333;letter-spacing:-0.250px;transform:scaleY(0.9);transform-origin:0 14.3px;">全技术防范系统设计施工服务；消防技术服务；教学专用仪器销售；数字视频监控系统销售；安防设备销售；智能无人飞行器销售；广播电视传输设备销售；智能机器人</div>
<div class="t" style="left:215.8px;top:797.85px;font-size:14.7px;color:#333;letter-spacing:-0.250px;transform:scaleY(0.9);transform-origin:0 14.3px;">销售；智能仓储装备销售；金属制品销售；供应链管理服务；国内贸易代理。</div>
<div class="abs" style="left:1348px;top:192px;width:8px;height:8px;border-radius:50%;background:#0a84ff"></div>
<div class="abs" style="left:0;top:0;width:1350px;height:1px;background:#dcdcdc;z-index:5"></div>
</body></html>
